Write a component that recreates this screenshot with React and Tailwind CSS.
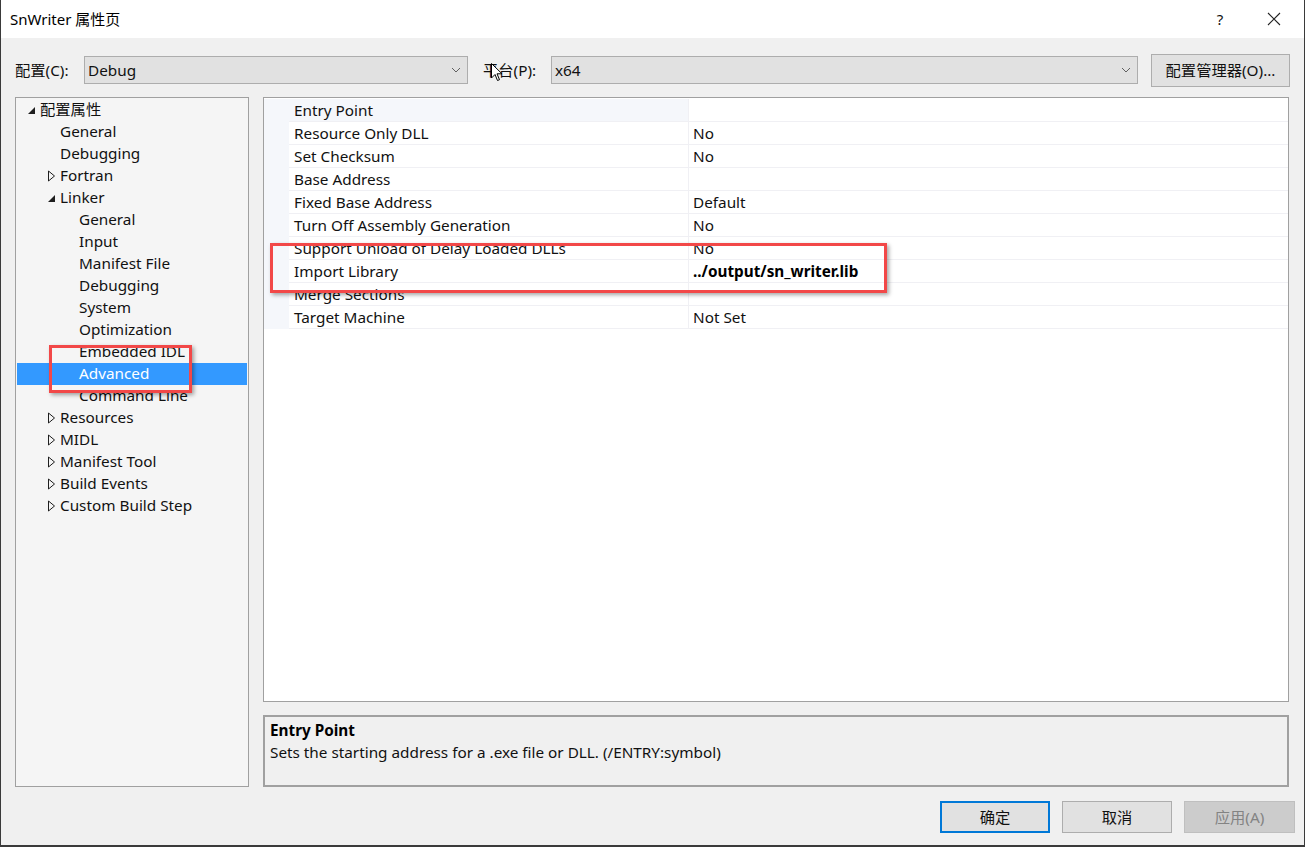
import React from "react";

const FONT = { fontFamily: '"Noto Sans", "Noto Sans CJK SC", sans-serif' };

function OpenTri() {
  return (
    <svg width="9" height="9" viewBox="0 0 9 9" className="shrink-0">
      <polygon points="8,1 8,8 1,8" fill="#1e1e1e" />
    </svg>
  );
}
function ClosedTri() {
  return (
    <svg width="9" height="12" viewBox="0 0 9 12" className="shrink-0">
      <polygon points="1.5,1 7.5,6 1.5,11" fill="none" stroke="#1e1e1e" strokeWidth="1" />
    </svg>
  );
}

const tree = [
  { t: "配置属性", l: 0, tri: "open" },
  { t: "General", l: 1 },
  { t: "Debugging", l: 1 },
  { t: "Fortran", l: 1, tri: "closed" },
  { t: "Linker", l: 1, tri: "open" },
  { t: "General", l: 2 },
  { t: "Input", l: 2 },
  { t: "Manifest File", l: 2 },
  { t: "Debugging", l: 2 },
  { t: "System", l: 2 },
  { t: "Optimization", l: 2 },
  { t: "Embedded IDL", l: 2 },
  { t: "Advanced", l: 2, sel: true },
  { t: "Command Line", l: 2 },
  { t: "Resources", l: 1, tri: "closed" },
  { t: "MIDL", l: 1, tri: "closed" },
  { t: "Manifest Tool", l: 1, tri: "closed" },
  { t: "Build Events", l: 1, tri: "closed" },
  { t: "Custom Build Step", l: 1, tri: "closed" },
];

const props = [
  ["Entry Point", ""],
  ["Resource Only DLL", "No"],
  ["Set Checksum", "No"],
  ["Base Address", ""],
  ["Fixed Base Address", "Default"],
  ["Turn Off Assembly Generation", "No"],
  ["Support Unload of Delay Loaded DLLs", "No"],
  ["Import Library", "../output/sn_writer.lib", true],
  ["Merge Sections", ""],
  ["Target Machine", "Not Set"],
];

function Chevron() {
  return (
    <svg width="10" height="6" viewBox="0 0 10 6">
      <polyline points="1,1 5,5 9,1" fill="none" stroke="#606060" strokeWidth="1" />
    </svg>
  );
}

export default function App() {
  return (
    <div
      className="relative w-[1305px] h-[847px] flex flex-col bg-[#f0f0f0] text-[15.3px] text-[#111] overflow-hidden border-l border-r border-[#3a3a3a]"
      style={FONT}
    >
      {/* title bar */}
      <div className="h-[38px] bg-white flex items-center shrink-0">
        <div className="pl-[9px] text-[15px] text-black">SnWriter 属性页</div>
        <div className="ml-auto flex items-center">
          <div className="w-[20px] text-center text-[15px] mr-[37px]">?</div>
          <svg width="14" height="14" viewBox="0 0 14 14" className="mr-[23px]">
            <path d="M1 1 L13 13 M13 1 L1 13" stroke="#222" strokeWidth="1.1" />
          </svg>
        </div>
      </div>

      {/* config row */}
      <div className="flex items-center h-[59px] pt-[5px] pl-[14px] pr-[14px] shrink-0">
        <div className="w-[69px]">配置(C):</div>
        <div className="w-[384px] h-[28px] bg-[#e1e1e1] border border-[#adadad] flex items-center pl-[3px] pr-[6px]">
          <span>Debug</span>
          <span className="ml-auto"><Chevron /></span>
        </div>
        <div className="w-[83px] pl-[15px]">平台(P):</div>
        <div className="w-[587px] h-[28px] bg-[#e1e1e1] border border-[#adadad] flex items-center pl-[3px] pr-[6px]">
          <span>x64</span>
          <span className="ml-auto"><Chevron /></span>
        </div>
        <div className="ml-auto w-[139px] h-[33px] bg-[#e1e1e1] border border-[#adadad] flex items-center justify-center">
          配置管理器(O)...
        </div>
      </div>

      {/* main */}
      <div className="flex pl-[14px] pr-[15px] h-[690px] shrink-0">
        {/* tree */}
        <div className="w-[234px] h-[690px] border border-[#a0a0a0] bg-[#f5f5f5] pt-[1px] px-[1px]">
          {tree.map((it, i) => (
            <div
              key={i}
              className={`h-[22px] flex items-center ${it.sel ? "bg-[#3399ff] text-white" : ""}`}
            >
              <div
                className="flex items-center justify-center w-[12px]"
                style={{ marginLeft: it.l === 0 ? 8 : it.l === 1 ? 28 : 47 }}
              >
                {it.tri === "open" ? <OpenTri /> : it.tri === "closed" ? <ClosedTri /> : null}
              </div>
              <span className="pl-[3px] leading-none">{it.t}</span>
            </div>
          ))}
        </div>

        <div className="ml-[14px] flex-1 flex flex-col">
          {/* grid */}
          <div className="h-[606px] border border-[#a0a0a0] bg-white flex pt-[1px]">
            <div className="w-[25px] bg-[#f5f7fb] h-[230px]" />
            <div className="flex-1">
              {props.map(([n, v, bold], i) => (
                <div key={i} className="h-[23px] flex border-b border-[#f0f0f4]">
                  <div
                    className={`w-[400px] pl-[5px] flex items-center border-r border-[#f0f0f4] ${i === 0 ? "bg-[#f5f7fb]" : ""}`}
                  >
                    {n}
                  </div>
                  <div className={`flex-1 pl-[4px] flex items-center ${bold ? "font-bold text-black" : ""}`}>{v}</div>
                </div>
              ))}
            </div>
          </div>
          {/* description */}
          <div className="mt-[13px] h-[72px] border-2 border-[#a0a0a0] bg-[#f0f0f0] px-[5px] pt-[2px]">
            <div className="font-bold leading-[22px] text-black">Entry Point</div>
            <div className="leading-[22px]">Sets the starting address for a .exe file or DLL. (/ENTRY:symbol)</div>
          </div>
        </div>
      </div>

      {/* buttons */}
      <div className="flex justify-end pr-[9px] pt-[14px] gap-[12px] shrink-0">
        <div className="w-[110px] h-[32px] border-2 border-[#0078d7] bg-[#e1e1e1] flex items-center justify-center">确定</div>
        <div className="w-[110px] h-[32px] border border-[#adadad] bg-[#e1e1e1] flex items-center justify-center">取消</div>
        <div className="w-[111px] h-[32px] border border-[#bfbfbf] bg-[#cccccc] text-[#838383] flex items-center justify-center">应用(A)</div>
      </div>
      <div className="absolute left-0 right-0 bottom-0 h-[2px] bg-[#3a3a3a]" />

      {/* red annotation boxes */}
      <div className="absolute left-[48px] top-[345px] w-[143px] h-[48px] border-[3px] border-[#f24848] shadow-[2px_2px_4px_rgba(0,0,0,0.35)]" />
      <div className="absolute left-[269px] top-[243px] w-[617px] h-[50px] border-[3px] border-[#f24848] shadow-[2px_2px_4px_rgba(0,0,0,0.35)]" />

      {/* mouse cursor */}
      <svg className="absolute left-[490px] top-[63px]" width="12" height="19" viewBox="0 0 12 19">
        <path d="M0.5 0.5 L0.5 15 L4 11.5 L6.5 17.5 L8.5 16.7 L6 10.8 L11 10.8 Z" fill="white" stroke="black" strokeWidth="1" />
      </svg>
    </div>
  );
}
